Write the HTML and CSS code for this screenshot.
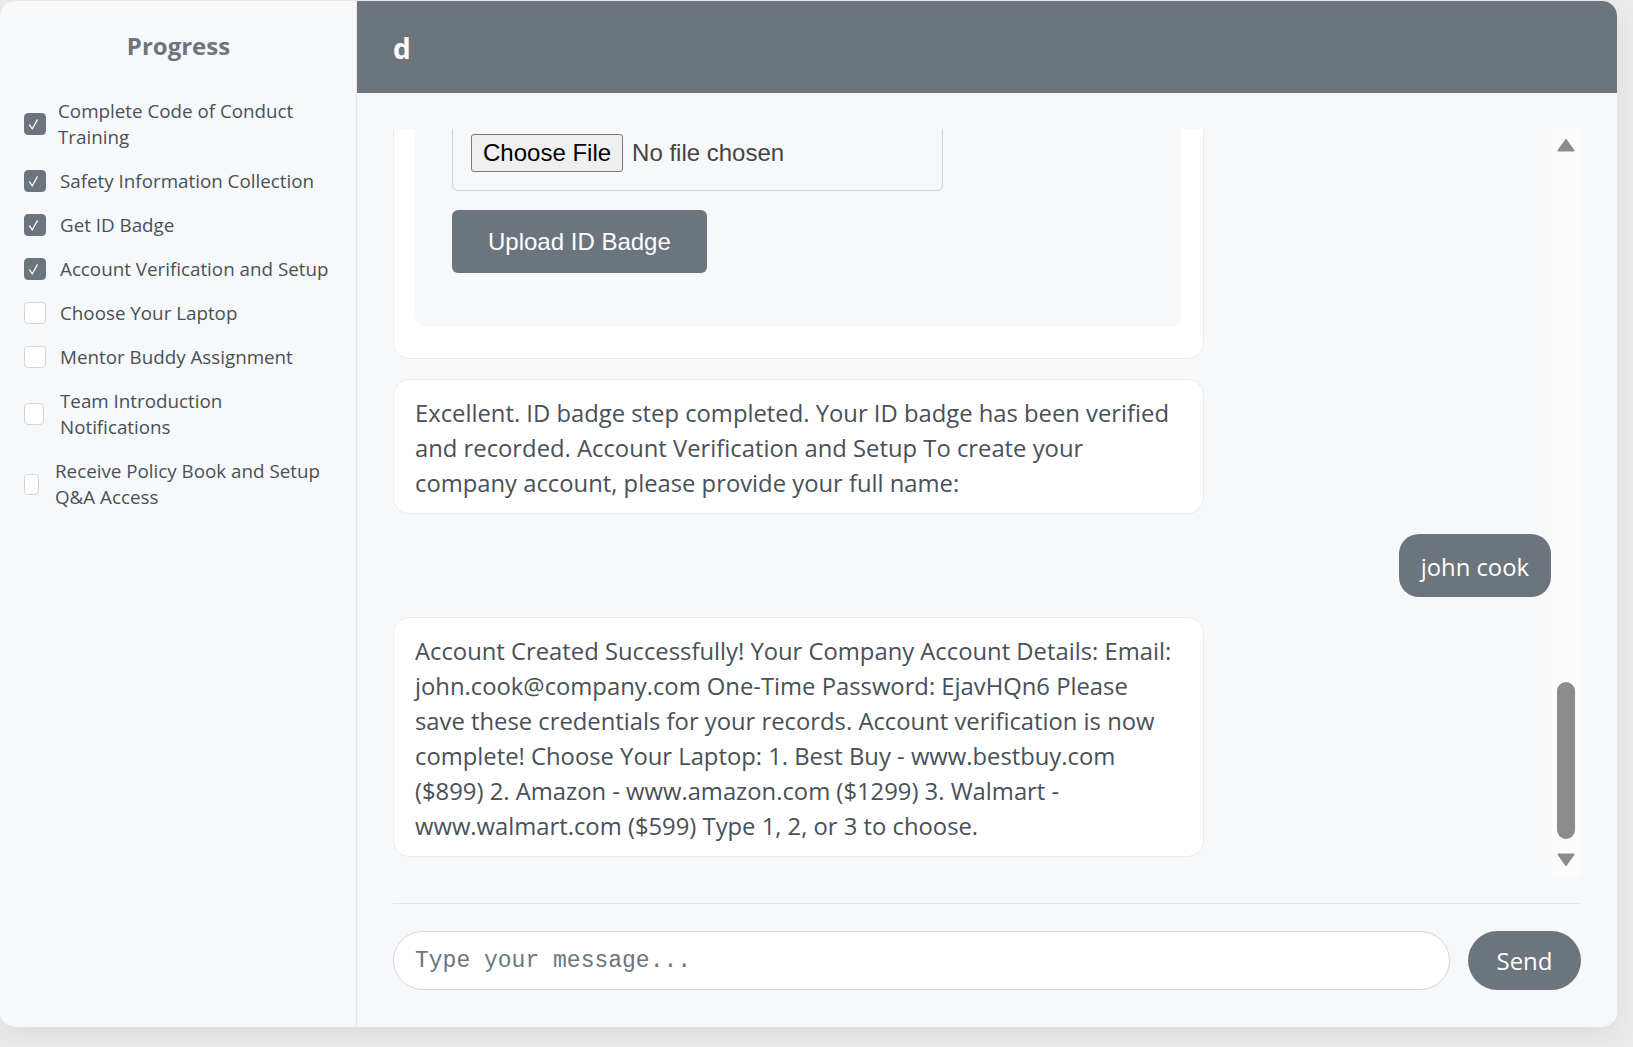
FILE: index.html
```html
<!DOCTYPE html>
<html lang="en">
<head>
<meta charset="utf-8">
<title>Onboarding Chat</title>
<link rel="stylesheet" href="styles.css">
</head>
<body>
<div class="app">
  <aside class="sidebar">
    <h2 class="sidebar-title">Progress</h2>
    <ul class="steps">
      <li class="step done"><span class="box"><svg viewBox="0 0 22 22"><path d="M5 12 L8 16.5 L13.5 6.5"/></svg></span><span class="label label-tight">Complete Code of Conduct Training</span></li>
      <li class="step done"><span class="box"><svg viewBox="0 0 22 22"><path d="M5 12 L8 16.5 L13.5 6.5"/></svg></span><span class="label">Safety Information Collection</span></li>
      <li class="step done"><span class="box"><svg viewBox="0 0 22 22"><path d="M5 12 L8 16.5 L13.5 6.5"/></svg></span><span class="label">Get ID Badge</span></li>
      <li class="step done"><span class="box"><svg viewBox="0 0 22 22"><path d="M5 12 L8 16.5 L13.5 6.5"/></svg></span><span class="label">Account Verification and Setup</span></li>
      <li class="step"><span class="box"></span><span class="label">Choose Your Laptop</span></li>
      <li class="step"><span class="box"></span><span class="label">Mentor Buddy Assignment</span></li>
      <li class="step"><span class="box box-20"></span><span class="label label-wide">Team Introduction Notifications</span></li>
      <li class="step"><span class="box box-15"></span><span class="label label-wide">Receive Policy Book and Setup Q&amp;A Access</span></li>
    </ul>
  </aside>
  <main class="main">
    <header class="header"><h1 class="header-title">d</h1></header>
    <section class="chat">
      <div class="scroller">
        <div class="messages">
          <div class="msg bot msg-wide">
            <div class="upload-panel">
              <div class="file-box"><input type="file" class="file-input"></div>
              <button class="upload-btn" type="button">Upload ID Badge</button>
            </div>
          </div>
          <div class="msg bot">Excellent. ID badge step completed. Your ID badge has been verified and recorded. Account Verification and Setup To create your company account, please provide your full name:</div>
          <div class="msg user">john cook</div>
          <div class="msg bot">Account Created Successfully! Your Company Account Details: Email: john.cook@company.com One-Time Password: EjavHQn6 Please save these credentials for your records. Account verification is now complete! Choose Your Laptop: 1. Best Buy - www.bestbuy.com ($899) 2. Amazon - www.amazon.com ($1299) 3. Walmart - www.walmart.com ($599) Type 1, 2, or 3 to choose.</div>
        </div>
        <div class="scrollbar">
          <svg class="arrow" viewBox="0 0 18 14"><path d="M9 2 L16.5 12.5 L1.5 12.5 Z"/></svg>
          <div class="track-space"></div>
          <div class="thumb"></div>
          <svg class="arrow arrow-down" viewBox="0 0 18 14"><path d="M1.5 1.5 L16.5 1.5 L9 12 Z"/></svg>
        </div>
      </div>
      <form class="composer">
        <input class="composer-input" type="text" placeholder="Type your message...">
        <button class="send-btn" type="button">Send</button>
      </form>
    </section>
  </main>
</div>
</body>
</html>
```

FILE: styles.css
```css
* { box-sizing: border-box; }

html, body {
  margin: 0;
  padding: 0;
  background: #ececec;
  height: 100%;
}

body {
  font-family: "Open Sans", "Noto Sans", sans-serif;
  overflow: hidden;
}

.app {
  margin-top: 1px;
  width: 1617px;
  height: 1026px;
  display: flex;
  background: #f7f8fa;
  border-radius: 15px;
  overflow: hidden;
  box-shadow: 0 8px 28px rgba(0, 0, 0, 0.07);
}

/* Sidebar */
.sidebar {
  width: 357px;
  flex-shrink: 0;
  border-right: 1px solid #e4e6e9;
  padding: 28px 23px 24px 24px;
}

.sidebar-title {
  margin: 0 0 35px 0;
  text-align: center;
  font-size: 24px;
  line-height: 34px;
  font-weight: 700;
  color: #6c757d;
}

.steps {
  list-style: none;
  margin: 0;
  padding: 0;
}

.step {
  display: flex;
  align-items: center;
  gap: 14px;
  margin-bottom: 18px;
  font-size: 18.8px;
  line-height: 26px;
  color: #495057;
}

.label { flex: 1; min-width: 0; }

.box {
  width: 22px;
  height: 22px;
  flex-shrink: 0;
  border: 1px solid #d3d6d9;
  border-radius: 4px;
  background: #fff;
  display: flex;
}

.box-20 { width: 20px; }
.box-15 { width: 15px; height: 21px; }

.step.done .box {
  background: #6c757d;
  border-color: #6c757d;
}

.box svg {
  width: 20px;
  height: 20px;
  fill: none;
  stroke: #fff;
  stroke-width: 1.4;
  stroke-linecap: round;
  stroke-linejoin: round;
}

.label-tight { margin-left: -2px; }
.label-wide { margin-left: 2px; }

/* Main */
.main {
  flex: 1;
  display: flex;
  flex-direction: column;
  min-width: 0;
}

.header {
  height: 92px;
  flex-shrink: 0;
  background: #6c757d;
  display: flex;
  align-items: center;
  padding-left: 36px;
}

.header-title {
  margin: 2px 0 0 0;
  color: #fff;
  font-size: 28px;
  font-weight: 700;
  line-height: 1;
}

.chat {
  flex: 1;
  min-height: 0;
  display: flex;
  flex-direction: column;
  padding: 36px 36px 37px 36px;
}

.scroller {
  flex: 1;
  min-height: 0;
  display: flex;
}

.messages {
  flex: 1;
  min-width: 0;
  display: flex;
  flex-direction: column;
  justify-content: flex-end;
  gap: 20px;
  overflow: hidden;
  padding-bottom: 19px;
}

.msg {
  flex-shrink: 0;
  max-width: 70%;
  padding: 16px 21px 12px 21px;
  border-radius: 16px;
  font-size: 23.8px;
  line-height: 35px;
  color: #495057;
}

.msg-wide { width: 70%; }

.msg.bot {
  align-self: flex-start;
  background: #fff;
  border: 1px solid #e9ecef;
}

.msg.user {
  align-self: flex-end;
  background: #6c757d;
  color: #fff;
  border-radius: 20px;
  padding-left: 22px;
  padding-right: 22px;
}

.upload-panel {
  background: #f7f8fa;
  border-radius: 12px;
  padding: 36px 36px 54px 37px;
  margin-bottom: 19px;
}

.file-box {
  width: 491px;
  border: 1px solid #ced4da;
  border-radius: 6px;
  padding: 18px;
}

.file-input {
  font-family: "Liberation Sans", Arial, sans-serif;
  font-size: 24px;
  color: #444;
  display: block;
  height: 38px;
}

.file-input::file-selector-button {
  font-family: "Liberation Sans", Arial, sans-serif;
  font-size: 24px;
  height: 38px;
  padding: 0 11px;
  margin-right: 9px;
  background: #efefef;
  border: 1px solid #7a7a7a;
  border-radius: 3px;
  color: #000;
}

.upload-btn {
  display: block;
  height: 63px;
  margin-top: 19px;
  padding: 0 36px;
  font-family: "Liberation Sans", Arial, sans-serif;
  font-size: 24px;
  line-height: 27px;
  color: #fff;
  background: #6c757d;
  border: none;
  border-radius: 6px;
}

/* Fake scrollbar */
.scrollbar {
  width: 30px;
  flex-shrink: 0;
  background: #fbfbfb;
  display: flex;
  flex-direction: column;
  align-items: center;
  padding: 9px 0;
}

.arrow {
  width: 18px;
  height: 14px;
  fill: #8c8c8c;
  stroke: #8c8c8c;
  stroke-width: 2;
  stroke-linejoin: round;
}

.track-space { flex: 1; }

.thumb {
  width: 18px;
  height: 157px;
  border-radius: 9px;
  background: #8c8c8c;
  margin-bottom: 14px;
}

/* Composer */
.composer {
  margin: 27px 0 0 0;
  padding-top: 27px;
  border-top: 1px solid #e4e6e9;
  display: flex;
  gap: 18px;
}

.composer-input {
  flex: 1;
  height: 59px;
  border: 1px solid #ced4da;
  border-radius: 30px;
  padding: 0 21px;
  background: #fff;
  font-family: "Liberation Mono", monospace;
  font-size: 23px;
  color: #495057;
  outline: none;
}

.composer-input::placeholder { color: #6c757d; }

.send-btn {
  width: 113px;
  height: 59px;
  border: none;
  border-radius: 30px;
  background: #6c757d;
  color: #fff;
  font-family: "Open Sans", "Noto Sans", sans-serif;
  font-size: 24px;
}
```
